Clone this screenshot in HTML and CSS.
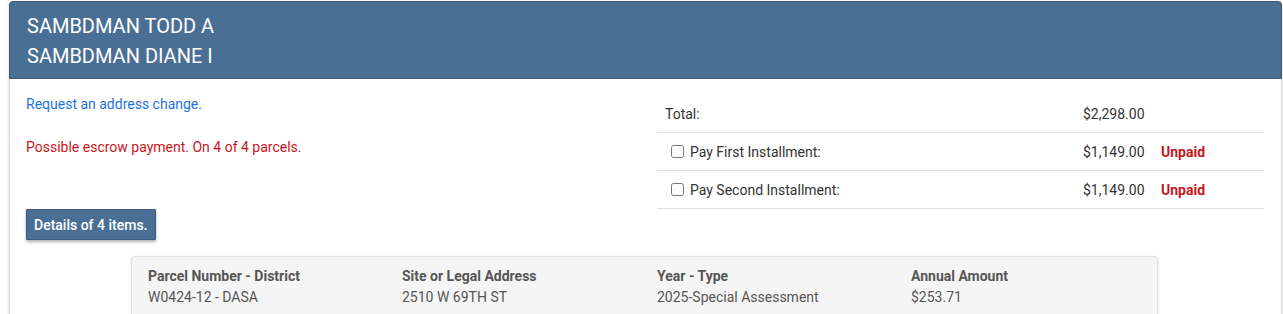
FILE: index.html
```html
<!DOCTYPE html>
<html>
<head>
<meta charset="utf-8">
<link rel="stylesheet" href="styles.css">
</head>
<body>
<div class="card">
  <div class="card-header">
    <div class="owner">SAMBDMAN TODD A</div>
    <div class="owner">SAMBDMAN DIANE I</div>
  </div>
  <div class="card-body">
    <div class="top-row">
      <div class="left-col">
        <a class="link" href="#">Request an address change.</a>
        <div class="escrow">Possible escrow payment. On 4 of 4 parcels.</div>
        <button class="details-btn">Details of 4 items.</button>
      </div>
      <div class="pay-table">
        <div class="pay-row">
          <div class="c-label">Total:</div>
          <div class="c-amt">$2,298.00</div>
          <div class="c-status"></div>
        </div>
        <div class="pay-row">
          <label class="c-label"><input type="checkbox" class="chk"> Pay First Installment:</label>
          <div class="c-amt">$1,149.00</div>
          <div class="c-status unpaid">Unpaid</div>
        </div>
        <div class="pay-row">
          <label class="c-label"><input type="checkbox" class="chk"> Pay Second Installment:</label>
          <div class="c-amt">$1,149.00</div>
          <div class="c-status unpaid">Unpaid</div>
        </div>
      </div>
    </div>
    <div class="parcel-card">
      <div class="parcel-grid">
        <div class="ph">Parcel Number - District</div>
        <div class="ph">Site or Legal Address</div>
        <div class="ph">Year - Type</div>
        <div class="ph">Annual Amount</div>
        <div class="pv">W0424-12 - DASA</div>
        <div class="pv">2510 W 69TH ST</div>
        <div class="pv">2025-Special Assessment</div>
        <div class="pv">$253.71</div>
      </div>
    </div>
  </div>
</div>
</body>
</html>
```

FILE: styles.css
```css
* { box-sizing: border-box; }
html, body { margin: 0; padding: 0; background: #fff; }
body {
  font-family: Roboto, "Liberation Sans", Arial, sans-serif;
  font-size: 14px;
  color: #333;
}
.card {
  margin: 1px 0 0 9px;
  width: 1273px;
  border: 1px solid #dcdcdc;
  border-radius: 4px;
  box-shadow: 0 1px 3px rgba(0,0,0,0.18);
  min-height: 400px;
}
.card-header {
  margin: -1px -1px 0 -1px;
  background: #4a6f95;
  border: 1px solid #3b5876;
  border-radius: 4px 4px 0 0;
  padding: 9px 17px 7px 17px;
  color: #fff;
}
.owner {
  font-size: 20px;
  line-height: 30px;
}
.card-body {
  padding: 15px 0 0 16px;
}
.top-row {
  display: flex;
}
.left-col {
  width: 631px;
  display: flex;
  flex-direction: column;
  align-items: flex-start;
}
.link {
  color: #1c73e0;
  text-decoration: none;
  line-height: 21px;
}
.escrow {
  color: #c8161d;
  margin-top: 22px;
  line-height: 21px;
}
.details-btn {
  margin-top: 51px;
  font-family: inherit;
  font-size: 14px;
  font-weight: 500;
  color: #fff;
  background: #4a6f95;
  border: 1px solid #3b5876;
  border-radius: 1px;
  padding: 0 7px;
  height: 31px;
  white-space: nowrap;
  box-shadow: 0 2px 3px rgba(0,0,0,0.3);
  cursor: pointer;
}
.pay-table {
  width: 607px;
  margin-top: 1px;
}
.pay-row {
  display: grid;
  grid-template-columns: 418px 78px 111px;
  height: 38px;
  align-items: center;
  border-bottom: 1px solid #dee2e6;
}
.c-label {
  padding-left: 8px;
  display: flex;
  align-items: center;
}
.chk {
  width: 13px;
  height: 13px;
  margin: 0 6px 0 6px;
}
.c-amt { padding-left: 8px; }
.c-status { padding-left: 8px; }
.unpaid { color: #c8161d; font-weight: 700; }
.parcel-card {
  margin: 16px 0 0 105px;
  width: 1027px;
  background: #f5f5f5;
  border: 1px solid #e0e0e0;
  border-radius: 4px;
  box-shadow: 0 1px 3px rgba(0,0,0,0.12);
  padding: 8px 0 10px 16px;
  height: 70px;
}
.parcel-grid {
  display: grid;
  grid-template-columns: 254px 255px 254px 1fr;
  color: #555;
}
.ph { font-weight: 700; line-height: 22px; }
.pv { line-height: 21px; }
```
